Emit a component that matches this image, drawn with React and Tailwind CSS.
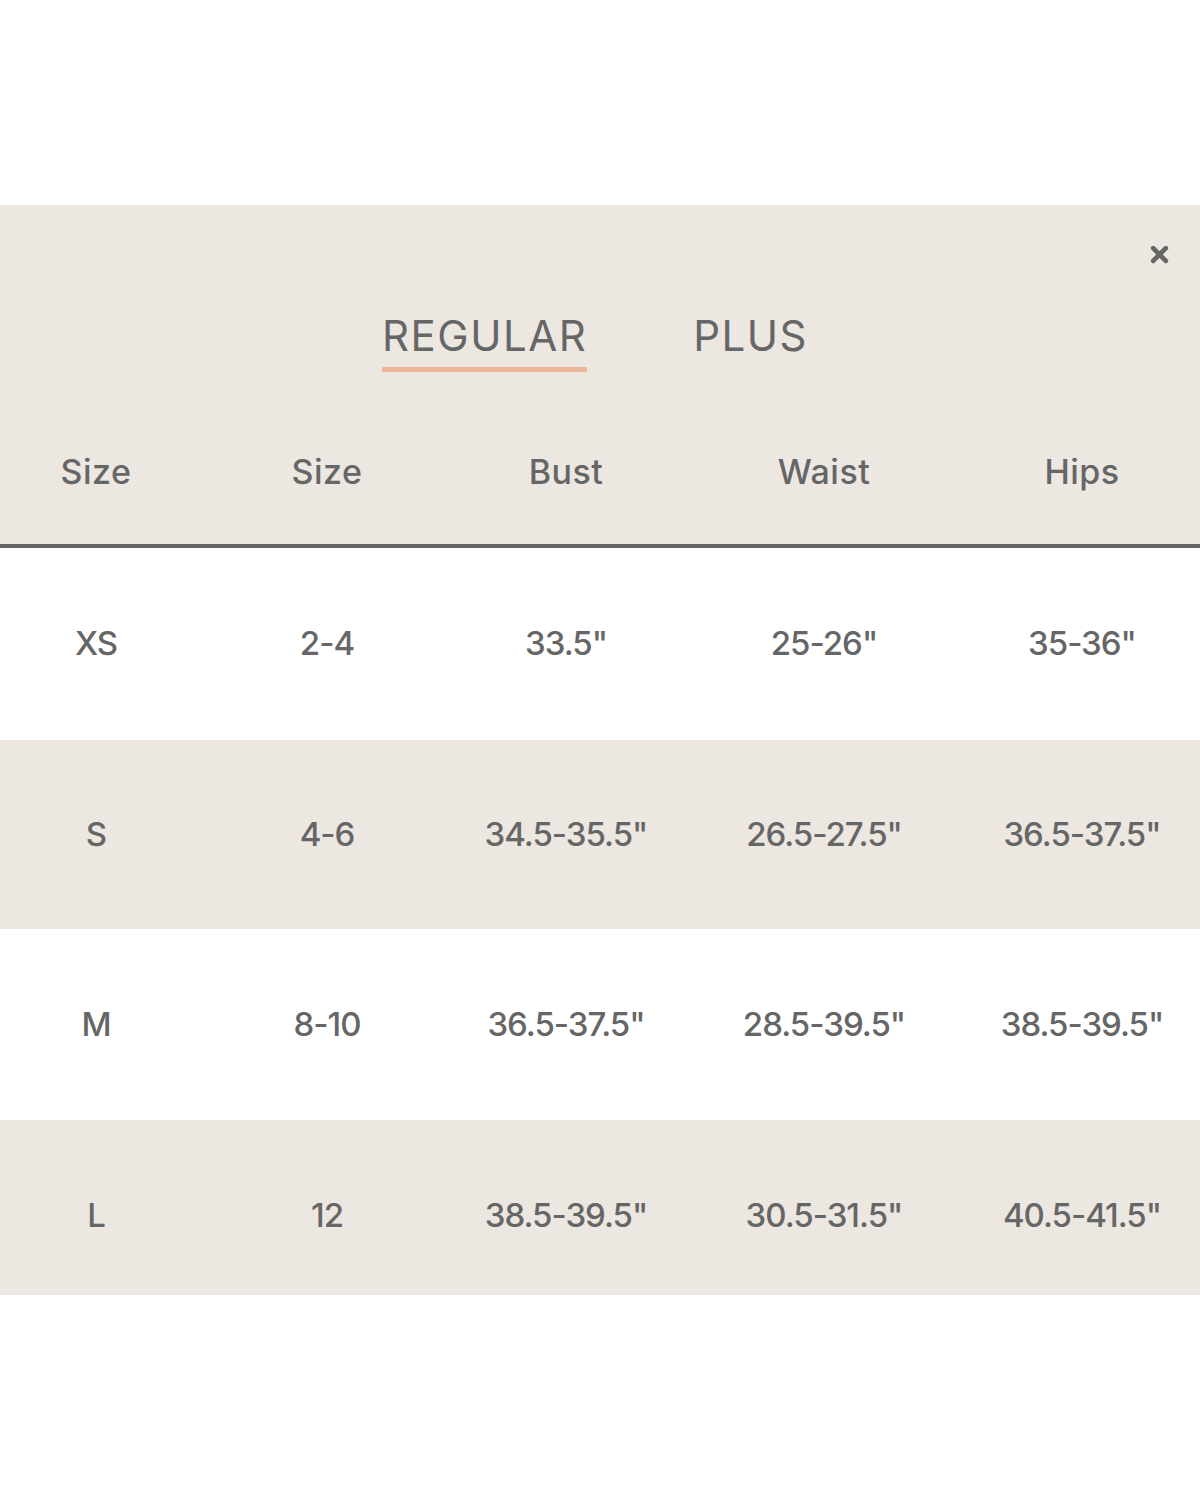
import React from "react";

const rows = [
  ["XS", "2-4", '33.5"', '25-26"', '35-36"'],
  ["S", "4-6", '34.5-35.5"', '26.5-27.5"', '36.5-37.5"'],
  ["M", "8-10", '36.5-37.5"', '28.5-39.5"', '38.5-39.5"'],
  ["L", "12", '38.5-39.5"', '30.5-31.5"', '40.5-41.5"'],
];
const heights = ["h-[192px]", "h-[189px]", "h-[191px]", "h-[191px]"];
const bgs = ["bg-white", "bg-[#ece7e1]", "bg-white", "bg-[#ece7e1]"];
const cols = "grid grid-cols-[192px_270px_208px_308px_208px_1fr]";

export default function App() {
  return (
    <div className="w-[1200px] h-[1500px] bg-white text-[#666666]" style={{ fontFamily: '"Inter", "Open Sans", sans-serif' }}>
      <div className="h-[205px]" />
      <div className="bg-[#ece7e1]">
        <div className="flex justify-end h-[100px] pt-[38px] pr-[30px]">
          <svg width="21" height="21" viewBox="0 0 20 20" className="mt-[1px]">
            <path d="M4 4 L16 16 M16 4 L4 16" stroke="#666666" strokeWidth="4.5" strokeLinecap="round" />
          </svg>
        </div>
        <div className="flex justify-center gap-[106px] pr-[10px] h-[100px]">
          <div className="flex flex-col items-center">
            <span className="text-[42px] leading-[62px] tracking-[1.5px] font-normal">REGULAR</span>
            <div className="w-full h-[5px] bg-[#ebb99a]" />
          </div>
          <div>
            <span className="text-[42px] leading-[62px] tracking-[1.5px] font-normal">PLUS</span>
          </div>
        </div>
        <div className={`${cols} h-[139px] pb-[6px] items-center text-[34px] font-medium tracking-[0.5px]`}>
          <div className="text-center">Size</div>
          <div className="text-center">Size</div>
          <div className="text-center">Bust</div>
          <div className="text-center">Waist</div>
          <div className="text-center">Hips</div>
        </div>
      </div>
      <div className="h-[4px] bg-[#666666]" />
      <div className="h-[747px] overflow-hidden">
        {rows.map((r, i) => (
          <div key={i} className={`${cols} ${heights[i]} ${bgs[i]} items-center text-[33px] font-medium tracking-[-1px]`}>
            {r.map((c, j) => (
              <div key={j} className="text-center">{c}</div>
            ))}
          </div>
        ))}
      </div>
    </div>
  );
}
